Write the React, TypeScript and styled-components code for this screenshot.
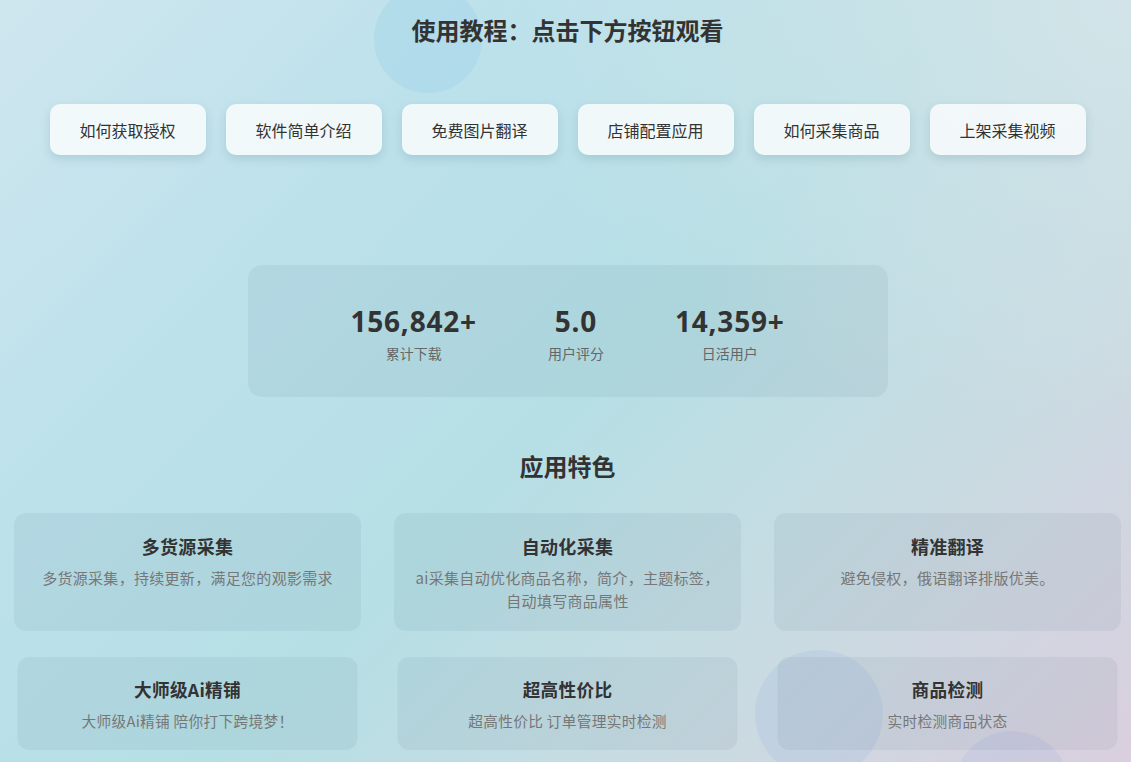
import * as React from 'react';
import styled, {createGlobalStyle} from 'styled-components';

const GlobalStyle = createGlobalStyle`
  html, body {
    margin: 0;
    padding: 0;
  }
  body {
    min-height: 100vh;
    font-family: "Noto Sans", "Noto Sans CJK SC", sans-serif;
    color: #333;
    background:
      radial-gradient(ellipse at 100% 0%, rgba(214, 229, 233, 0.85) 0%, rgba(214, 229, 233, 0) 40%),
      linear-gradient(135deg, #cfe6ef 0%, #bce1eb 28%, #b6dfe5 52%, #c9dbe2 75%, #dacfdf 100%);
    background-attachment: fixed;
    overflow: hidden;
  }
`;

const Page = styled.div`
  position: relative;
  min-height: 100vh;
  padding: 0 10px 0 14px;
  box-sizing: border-box;
  display: flex;
  flex-direction: column;
  align-items: center;
`;

// soft floating bubbles behind the content
const Bubble = styled.div<{ size: number; tint: string }>`
  position: absolute;
  width: ${(props) => props.size}px;
  height: ${(props) => props.size}px;
  border-radius: 50%;
  background: ${(props) => props.tint};
  pointer-events: none;
  z-index: 0;
`;

const Content = styled.div`
  position: relative;
  z-index: 1;
  width: 100%;
  display: flex;
  flex-direction: column;
  align-items: center;
`;

const Heading = styled.h2<{ top: number }>`
  margin: ${(props) => props.top}px 0 0;
  font-family: "Noto Sans CJK SC", sans-serif;
  font-size: 24px;
  line-height: 32px;
  font-weight: 700;
  color: #333;
  text-align: center;
`;

const TutorialRow = styled.div`
  margin-top: 58px;
  display: flex;
  gap: 20px;
  justify-content: center;
`;

const TutorialButton = styled.button`
  width: 156px;
  height: 51px;
  border: none;
  border-radius: 10px;
  background: rgba(246, 251, 252, 0.9);
  box-shadow: 0 4px 10px rgba(60, 110, 130, 0.18);
  font-family: "Noto Sans CJK SC", sans-serif;
  font-size: 16px;
  color: #333;
  cursor: pointer;
`;

const StatsPanel = styled.div`
  margin-top: 110px;
  width: 640px;
  box-sizing: border-box;
  padding: 38px 0 34px;
  border-radius: 14px;
  background: rgba(0, 40, 60, 0.05);
  display: flex;
  justify-content: center;
  gap: 71px;
`;

const Stat = styled.div`
  display: flex;
  flex-direction: column;
  align-items: center;
`;

const StatValue = styled.div`
  font-family: "Noto Sans", "Noto Sans CJK SC", sans-serif;
  font-size: 28px;
  line-height: 36px;
  font-weight: 700;
  letter-spacing: 0.8px;
  color: #333;
`;

const StatLabel = styled.div`
  margin-top: 4px;
  font-family: "Noto Sans CJK SC", sans-serif;
  font-size: 14px;
  line-height: 20px;
  color: #666;
`;

const FeatureGrid = styled.div`
  margin-top: 31px;
  width: 100%;
  display: grid;
  grid-template-columns: repeat(3, 1fr);
  column-gap: 33px;
  row-gap: 25px;
`;

const FeatureCard = styled.div<{ $shrink: boolean }>`
  padding: 20px 20px 19px;
  border-radius: 12px;
  background: rgba(0, 40, 60, 0.05);
  text-align: center;
  transform: ${(props) => (props.$shrink ? 'scale(0.98)' : 'none')};
`;

const FeatureTitle = styled.div`
  font-family: "Noto Sans CJK SC", sans-serif;
  font-size: 18px;
  line-height: 26px;
  font-weight: 700;
  letter-spacing: 0.3px;
  color: #333;
  margin-bottom: 7px;
`;

const FeatureText = styled.div`
  font-family: "Noto Sans CJK SC", sans-serif;
  font-size: 15px;
  line-height: 23px;
  letter-spacing: 0.3px;
  color: #777;
`;

const tutorials = ['如何获取授权', '软件简单介绍', '免费图片翻译', '店铺配置应用', '如何采集商品', '上架采集视频'];

const stats = [
  {value: '156,842+', label: '累计下载'},
  {value: '5.0', label: '用户评分'},
  {value: '14,359+', label: '日活用户'},
];

const features = [
  {title: '多货源采集', text: '多货源采集，持续更新，满足您的观影需求'},
  {title: '自动化采集', text: 'ai采集自动优化商品名称，简介，主题标签，自动填写商品属性'},
  {title: '精准翻译', text: '避免侵权，俄语翻译排版优美。'},
  {title: '大师级Ai精铺', text: '大师级Ai精铺 陪你打下跨境梦！'},
  {title: '超高性价比', text: '超高性价比 订单管理实时检测'},
  {title: '商品检测', text: '实时检测商品状态'},
];

export default function App() {
  return (
    <>
      <GlobalStyle />
      <Page>
        <Bubble size={108} tint="rgba(150, 205, 232, 0.3)" style={{left: 374, top: -15}} />
        <Bubble size={128} tint="rgba(165, 190, 228, 0.28)" style={{left: 755, top: 650}} />
        <Bubble size={116} tint="rgba(170, 185, 225, 0.25)" style={{left: 954, top: 731}} />
        <Content>
          <Heading top={14}>使用教程：点击下方按钮观看</Heading>
          <TutorialRow>
            {tutorials.map((t) => (
              <TutorialButton key={t}>{t}</TutorialButton>
            ))}
          </TutorialRow>
          <StatsPanel>
            {stats.map((s) => (
              <Stat key={s.label}>
                <StatValue>{s.value}</StatValue>
                <StatLabel>{s.label}</StatLabel>
              </Stat>
            ))}
          </StatsPanel>
          <Heading top={53}>应用特色</Heading>
          <FeatureGrid>
            {features.map((f, i) => (
              <FeatureCard key={f.title} $shrink={i >= 3}>
                <FeatureTitle>{f.title}</FeatureTitle>
                <FeatureText>{f.text}</FeatureText>
              </FeatureCard>
            ))}
          </FeatureGrid>
        </Content>
      </Page>
    </>
  );
}
